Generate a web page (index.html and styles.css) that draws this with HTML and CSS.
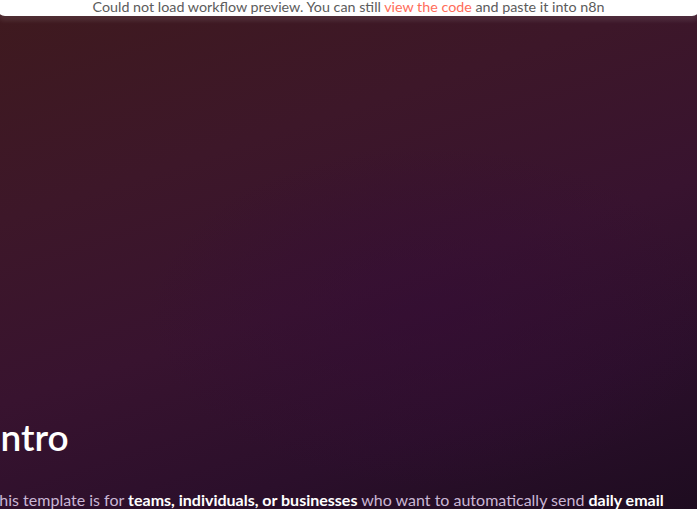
FILE: index.html
```html
<!DOCTYPE html>
<html>
<head>
<meta charset="utf-8">
<link rel="stylesheet" href="styles.css">
</head>
<body>
<div class="page">
  <div class="notice">Could not load workflow preview. You can still <a class="link" href="#">view the code</a> and paste it into n8n</div>
  <div class="hero"></div>
  <div class="content">
    <h2 class="title">Intro</h2>
    <p class="text">This template is for <b>teams, individuals, or businesses</b> who want to automatically send <b>daily email</b> reports</p>
  </div>
</div>
</body>
</html>
```
FILE: styles.css
```css
html, body {
  margin: 0;
  padding: 0;
  height: 100%;
  overflow: hidden;
}
body {
  font-family: "Lato", "Liberation Sans", sans-serif;
  background:
    radial-gradient(ellipse 55% 45% at 62% 62%, rgba(52, 12, 54, 0.55), rgba(52, 12, 54, 0) 75%),
    linear-gradient(162deg, #3f1a1e 0%, #3d1729 30%, #38132f 55%, #2b0f2b 78%, #1e0c20 100%);
}
.page {
  height: 509px;
  display: flex;
  flex-direction: column;
  overflow: hidden;
}
.notice {
  flex: none;
  margin: -4px -3px 0;
  height: 20px;
  line-height: 21px;
  background: #fff;
  border-radius: 0 0 8px 8px;
  box-shadow: 0 5px 4px rgba(255, 255, 255, 0.09);
  text-align: center;
  color: #5c5c5c;
  font-size: 14.3px;
}
.link {
  color: #ff6d5a;
  text-decoration: none;
}
.hero {
  flex: 1;
}
.content {
  flex: none;
  margin-left: -10px;
  width: 700px;
}
.title {
  margin: 0 0 29px;
  font-size: 37px;
  font-weight: 600;
  color: #fff;
  line-height: 44px;
}
.text {
  margin: 0 0 -27px;
  font-size: 16px;
  line-height: 24px;
  color: #c9b6d4;
}
.text b {
  color: #fff;
  font-weight: 700;
}
```
